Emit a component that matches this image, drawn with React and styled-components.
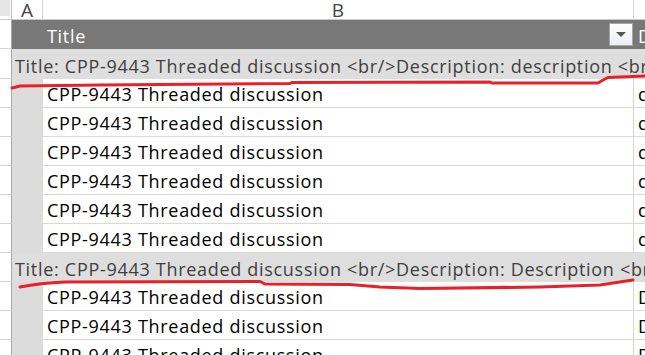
import React from 'react'
import styled, { createGlobalStyle } from 'styled-components'

const GlobalStyle = createGlobalStyle`
  html, body {
    margin: 0;
    padding: 0;
    background: #fff;
    overflow: hidden;
  }
  body {
    font-family: "Open Sans", "Noto Sans", sans-serif;
  }
`

const groups = [
  { desc: 'description', rows: 6 },
  { desc: 'Description', rows: 4 },
]

const TITLE = 'CPP-9443 Threaded discussion'

const App = () => {
  return (
    <>
      <GlobalStyle />
      <SheetWrap>
        <Sheet>
          <Row $h={20}>
            <Corner />
            <ColLetter $w={31}>A</ColLetter>
            <ColLetter $w={591}>B</ColLetter>
            <ColLetter $w={12} $last />
          </Row>

          <Row $h={29}>
            <RowHead />
            <HeadCell $w={31} />
            <HeadCell $w={591}>
              <span>Title</span>
              <FilterBtn>
                <svg width="10" height="6" viewBox="0 0 10 6">
                  <path d="M0 0 L10 0 L5 5 Z" fill="#555" />
                </svg>
              </FilterBtn>
            </HeadCell>
            <HeadCell $w={12} $grow>Description</HeadCell>
          </Row>

          {groups.map((g, gi) => (
            <React.Fragment key={gi}>
              <Row $h={gi === 0 ? 30 : 29}>
                <RowHead />
                <GroupCell>
                  Title: {TITLE} &lt;br/&gt;Description: {g.desc} &lt;br/&gt;
                </GroupCell>
              </Row>
              {Array.from({ length: g.rows }).map((_, i) => (
                <Row $h={29} key={i}>
                  <RowHead />
                  <ColA />
                  <DataCell $w={591}>{TITLE}</DataCell>
                  <DataCell $w={12} $grow $last>{g.desc}</DataCell>
                </Row>
              ))}
            </React.Fragment>
          ))}
        </Sheet>

        <Marks viewBox="0 0 645 355" width="645" height="355">
          <path
            d="M12 88 L20 86 L100 85 L290 83.5 L292 82.5 L490 82 L492 83 L598 83 Q603 80 608 77.5 L645 76"
            stroke="#e8202a"
            strokeWidth="3"
            fill="none"
            strokeLinecap="round"
          />
          <path
            d="M20 287 Q40 283 65 282 L260 281.5 L265 284 L350 284.5 L380 287 L420 288.5 L540 287 L600 285 L633 280"
            stroke="#e8202a"
            strokeWidth="3"
            fill="none"
            strokeLinecap="round"
          />
        </Marks>
      </SheetWrap>
    </>
  )
}

const SheetWrap = styled.div`
  position: relative;
  width: 645px;
  height: 355px;
  overflow: hidden;
`

const Sheet = styled.div`
  display: flex;
  flex-direction: column;
  width: 700px;
  font-size: 18px;
  letter-spacing: 0.7px;
`

const Row = styled.div`
  display: flex;
  height: ${(p) => p.$h}px;
  flex-shrink: 0;
`

const Corner = styled.div`
  width: 12px;
  flex: none;
  box-sizing: border-box;
  border-right: 1px solid #bdbdbd;
  border-bottom: 1px solid #c8c8c8;
  background: linear-gradient(#e6e6e6, #e6e6e6) no-repeat 0 0 / 10px 16px;
`

const ColLetter = styled.div`
  width: ${(p) => p.$w}px;
  flex: ${(p) => (p.$last ? '1 0 auto' : 'none')};
  box-sizing: border-box;
  border-right: ${(p) => (p.$last ? 'none' : '1px solid #d4d4d4')};
  border-bottom: 1px solid #c8c8c8;
  display: flex;
  align-items: center;
  justify-content: center;
  color: #444;
  font-size: 19px;
  letter-spacing: 0;
  line-height: 20px;
  padding-top: 1px;
  overflow: visible;
`

const RowHead = styled.div`
  width: 12px;
  flex: none;
  box-sizing: border-box;
  border-right: 1px solid #a8a8a8;
  border-bottom: 1px solid #d4d4d4;
  background: #fff;
`

const HeadCell = styled.div`
  position: relative;
  width: ${(p) => p.$w}px;
  flex: ${(p) => (p.$grow ? '1 0 auto' : 'none')};
  box-sizing: border-box;
  background: #787878;
  color: #fff;
  display: flex;
  align-items: center;
  padding-left: 4px;
  padding-top: 2px;
  white-space: nowrap;
  overflow: hidden;
`

const FilterBtn = styled.div`
  position: absolute;
  right: 1px;
  top: 3px;
  width: 24px;
  height: 23px;
  box-sizing: border-box;
  border: 1px solid #a6a6a6;
  background: linear-gradient(#fdfdfd, #eceef2);
  display: flex;
  align-items: center;
  justify-content: center;
`

const GroupCell = styled.div`
  flex: 1 0 auto;
  width: 0;
  background: #dedede;
  color: #3e3e3e;
  display: flex;
  align-items: center;
  padding-left: 3px;
  padding-top: 3px;
  white-space: nowrap;
  overflow: hidden;
`

const ColA = styled.div`
  width: 31px;
  flex: none;
  background: #dcdcdc;
`

const DataCell = styled.div`
  width: ${(p) => p.$w}px;
  flex: ${(p) => (p.$grow ? '1 0 auto' : 'none')};
  box-sizing: border-box;
  border-right: ${(p) => (p.$last ? 'none' : '1px solid #d4d4d4')};
  border-bottom: 1px solid #d9d9d9;
  color: #000;
  display: flex;
  align-items: center;
  padding-left: 4px;
  padding-top: 2px;
  white-space: nowrap;
  overflow: hidden;
`

const Marks = styled.svg`
  position: absolute;
  left: 0;
  top: 0;
  pointer-events: none;
`

export default App
